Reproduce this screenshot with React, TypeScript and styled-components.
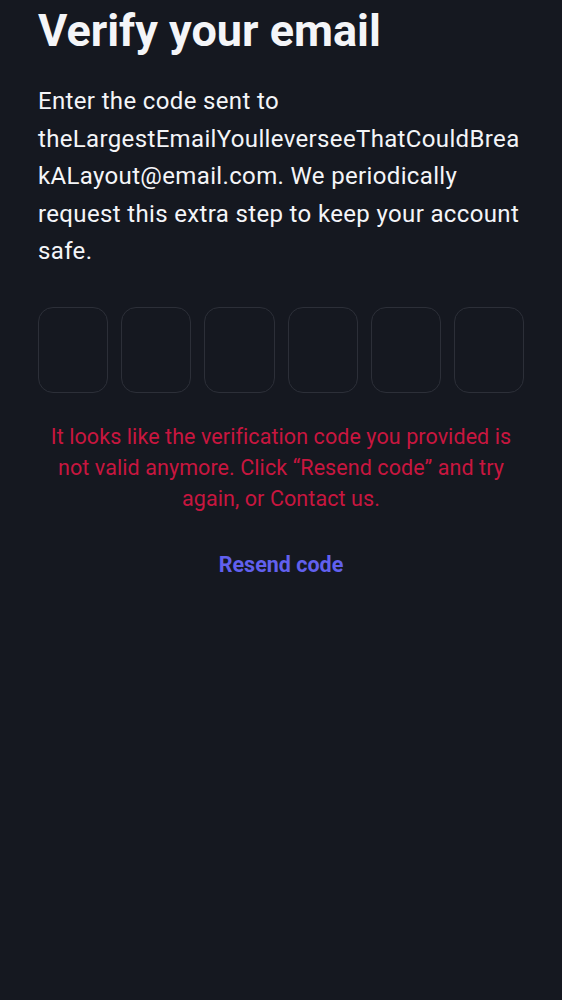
import React from "react";
import styled, { createGlobalStyle } from "styled-components";

const Global = createGlobalStyle`
  html, body {
    margin: 0;
    padding: 0;
    background: #151820;
  }
  body {
    font-family: Roboto, "Noto Sans", sans-serif;
  }
`;

const Page = styled.main`
  min-height: 1000px;
  box-sizing: border-box;
  padding: 0 38px;
  background: #151820;
  display: flex;
  flex-direction: column;
`;

const Title = styled.h1`
  margin: 0;
  margin-top: 5px;
  font-size: 45px;
  line-height: 52px;
  font-weight: 700;
  color: #f4f5f8;
`;

const Lead = styled.p`
  margin: 26px 0 0;
  font-size: 24px;
  letter-spacing: 0.35px;
  line-height: 37.5px;
  color: #f4f5f8;
  overflow-wrap: anywhere;
  word-break: break-word;
`;

const CodeRow = styled.div`
  display: flex;
  gap: 13px;
  margin-top: 36px;
`;

const CodeBox = styled.div`
  flex: 1;
  height: 86px;
  box-sizing: border-box;
  border: 1.5px solid #2c2f38;
  border-radius: 15px;
`;

const ErrorText = styled.p`
  margin: 28px 0 0;
  text-align: center;
  font-size: 21.5px;
  letter-spacing: 0.08px;
  line-height: 31px;
  color: #c8163f;
`;

const ResendButton = styled.button`
  align-self: center;
  margin-top: 38px;
  background: none;
  border: none;
  padding: 0;
  font-family: Roboto, "Noto Sans", sans-serif;
  font-size: 21.5px;
  line-height: 26px;
  font-weight: 700;
  color: #6160ee;
  cursor: pointer;
`;

export default function App() {
  return (
    <>
      <Global />
      <Page>
        <Title>Verify your email</Title>
        <Lead>
          Enter the code sent to theLargestEmailYoulleverseeThatCouldBreakALayout@email.com. We
          periodically request this extra step to keep your account safe.
        </Lead>
        <CodeRow>
          {Array.from({ length: 6 }).map((_, i) => (
            <CodeBox key={i} />
          ))}
        </CodeRow>
        <ErrorText>
          It looks like the verification code you provided is not valid anymore. Click “Resend
          code” and try again, or Contact us.
        </ErrorText>
        <ResendButton>Resend code</ResendButton>
      </Page>
    </>
  );
}
